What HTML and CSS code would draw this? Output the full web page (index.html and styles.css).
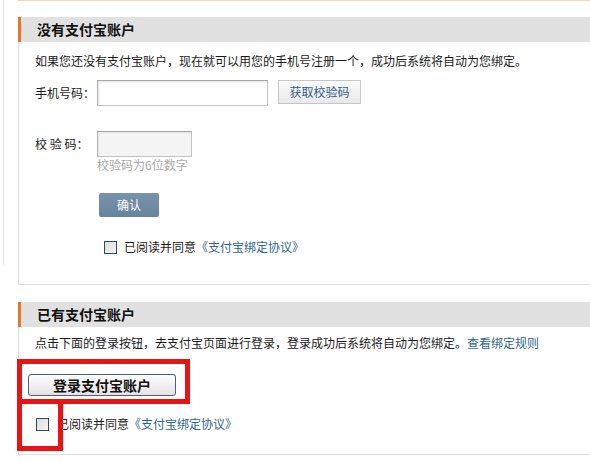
FILE: index.html
```html
<!DOCTYPE html>
<html lang="zh-CN">
<head>
	<meta charset="UTF-8">
	<title>绑定支付宝账户</title>
	<link rel="stylesheet" href="styles.css">
</head>
<body>
<div id="page">
	<div class="rail"></div>
	<div class="main">
		<div class="topline"></div>

		<div class="sec first">
			<h3 class="sec-head">没有支付宝账户</h3>
			<div class="sec-body body-new">
				<p class="intro">如果您还没有支付宝账户，现在就可以用您的手机号注册一个，成功后系统将自动为您绑定。</p>
				<div class="row">
					<label class="lbl">手机号码：</label>
					<input type="text" class="ipt ipt-phone">
					<a href="javascript:;" class="btn-get">获取校验码</a>
				</div>
				<div class="row row-code">
					<label class="lbl">校 验 码：</label>
					<input type="text" class="ipt ipt-code">
				</div>
				<p class="hint">校验码为6位数字</p>
				<a href="javascript:;" class="btn-ok">确认</a>
				<div class="agree agree-new">
					<span class="chk"></span>已阅读并同意<a href="javascript:;" class="link">《支付宝绑定协议》</a>
				</div>
			</div>
		</div>

		<div class="sec second">
			<h3 class="sec-head">已有支付宝账户</h3>
			<div class="sec-body body-old">
				<p class="intro">点击下面的登录按钮，去支付宝页面进行登录，登录成功后系统将自动为您绑定。<a href="javascript:;" class="link">查看绑定规则</a></p>
				<a href="javascript:;" class="btn-login">登录支付宝账户</a>
				<div class="agree agree-old">
					<span class="chk"></span>已阅读并同意<a href="javascript:;" class="link">《支付宝绑定协议》</a>
				</div>
				<div class="mark mark-btn"></div>
				<div class="mark mark-chk"></div>
			</div>
		</div>
	</div>
</div>
</body>
</html>
```

FILE: styles.css
```css
*{
	margin: 0;
	padding: 0;
	text-decoration: none;
}
body {
	font-family: "Noto Sans CJK SC", "Liberation Sans", sans-serif;
	font-size: 12px;
	color: #1a1a1a;
	background: #fff;
}
#page {
	display: flex;
	width: 590px;
}
.rail {
	width: 3px;
	height: 265px;
	border-right: 1px solid #e6e6e6;
}
.main {
	flex: 1;
	margin-left: 14px;
}
.topline {
	border-top: 1px solid #f5d8b6;
}
.sec-head {
	height: 25px;
	line-height: 25px;
	padding-left: 16px;
	font-size: 14px;
	font-weight: bold;
	color: #111;
	background-color: #e1e1e1;
	border-left: 3px solid #e9772a;
}
.first {
	margin-top: 16px;
}
.second {
	margin-top: 17px;
}
.sec-body {
	position: relative;
	padding-left: 16px;
	border-left: 1px solid #dedede;
	border-bottom: 1px solid #dedede;
}
.intro {
	line-height: 20px;
}
.body-new {
	padding-top: 9px;
	padding-bottom: 27px;
}
.body-old {
	padding-top: 6px;
	padding-bottom: 20px;
}
.row {
	display: flex;
	align-items: center;
	margin-top: 9px;
}
.row-code {
	margin-top: 25px;
}
.lbl {
	width: 62px;
	line-height: 20px;
}
.ipt {
	height: 26px;
	box-sizing: border-box;
	border: 1px solid #c3c3c3;
	border-top-color: #a9a9a9;
	border-left-color: #b3b3b3;
	box-shadow: inset 1px 1px 2px #e3e3e3;
	background: #fff;
}
.ipt-phone {
	width: 171px;
}
.ipt-code {
	width: 95px;
	background: #f4f4f4;
}
.btn-get {
	display: block;
	margin-left: 10px;
	width: 83px;
	height: 24px;
	line-height: 22px;
	box-sizing: border-box;
	text-align: center;
	color: #2f5f86;
	border: 1px solid #c6c6c6;
	background: linear-gradient(#fbfbfb, #e9e9e9);
	align-self: flex-start;
}
.hint {
	margin-top: 1px;
	padding-left: 62px;
	line-height: 14px;
	color: #aaa;
}
.btn-ok {
	display: block;
	margin: 21px 0 0 64px;
	width: 60px;
	height: 24px;
	line-height: 23px;
	text-align: center;
	color: #fff;
	background: linear-gradient(#7894ab, #6783a0);
	border-radius: 2px;
}
.agree {
	display: flex;
	align-items: center;
	line-height: 20px;
}
.agree-new {
	margin: 20px 0 0 69px;
}
.agree-old {
	margin: 18px 0 0 1px;
}
.chk {
	width: 11px;
	height: 11px;
	border: 1px solid #2c4b60;
	background: linear-gradient(135deg, #dcdcdc, #f6f6f6);
	margin-right: 7px;
}
.agree-old .chk {
	margin-right: 8px;
}
.link {
	color: #2f6690;
}
.btn-login {
	display: block;
	margin: 21px 0 0 -7px;
	width: 148px;
	height: 22px;
	line-height: 20px;
	box-sizing: border-box;
	text-align: center;
	font-size: 14px;
	font-weight: bold;
	color: #111;
	border: 1px solid #4d5f70;
	border-radius: 3px;
	background: linear-gradient(#fdfdfd, #e4e4e4);
}
/* red annotation frames */
.mark {
	position: absolute;
	border: 5px solid #ea1212;
}
.mark-btn {
	left: -2px;
	top: 32px;
	width: 163px;
	height: 35px;
}
.mark-chk {
	left: -2px;
	top: 72px;
	width: 36px;
	height: 42px;
}
```
